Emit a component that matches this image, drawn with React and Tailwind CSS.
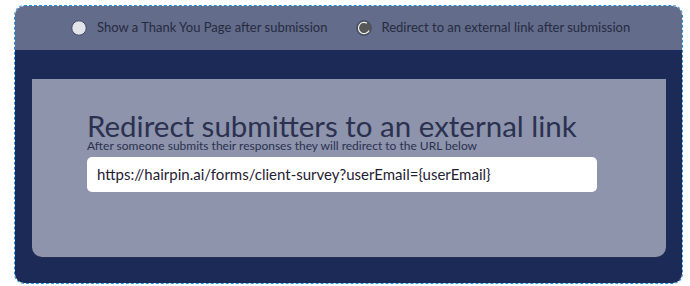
export default function App() {
  const font = { fontFamily: "Lato, 'Noto Sans', sans-serif" };
  return (
    <div className="w-[690px] h-[286px] bg-white pt-[5px] pl-[14px]" style={font}>
      <div className="w-[669px] h-[279px] border border-dashed border-[#1e95e6] rounded-[10px] overflow-hidden flex flex-col">
        <div className="h-[44px] bg-[#636c8b] flex items-center">
          <div className="flex items-center ml-[56px]">
            <svg width="16" height="16" viewBox="0 0 16 16">
              <circle cx="8" cy="8" r="7.2" fill="#e2e4eb" stroke="#40465c" strokeWidth="0.9" />
            </svg>
            <span className="ml-[10px] text-[13px] text-[#262b40]">Show a Thank You Page after submission</span>
          </div>
          <div className="flex items-center ml-[28px]">
            <svg width="16" height="16" viewBox="0 0 16 16">
              <circle cx="8" cy="8" r="7.4" fill="#555759" stroke="#3c4052" strokeWidth="0.6" />
              <path d="M11 3.2 A5.6 5.6 0 1 0 13.1 10.4" fill="none" stroke="#f2f2f2" strokeWidth="1.2" />
            </svg>
            <span className="ml-[10px] text-[13px] text-[#262b40]">Redirect to an external link after submission</span>
          </div>
        </div>
        <div className="flex-1 bg-[#1b2a57] pt-[29px] pl-[17px] pr-[16px]">
          <div className="h-[178px] bg-[#8d94ac] rounded-b-[10px] shadow-[0_1px_0_#26304f] pl-[55px] pt-[35px]">
            <div className="text-[29.5px] leading-[24px] text-[#2c3150]">Redirect submitters to an external link</div>
            <div className="mt-[1px] text-[12px] leading-[14px] text-[#2c3150]">After someone submits their responses they will redirect to the URL below</div>
            <div className="mt-[4px] w-[510px] h-[35px] bg-white rounded-[5px] flex items-center pl-[10px] text-[15px] text-[#1f2233]">
              https://hairpin.ai/forms/client-survey?userEmail=&#123;userEmail&#125;
            </div>
          </div>
        </div>
      </div>
    </div>
  );
}
